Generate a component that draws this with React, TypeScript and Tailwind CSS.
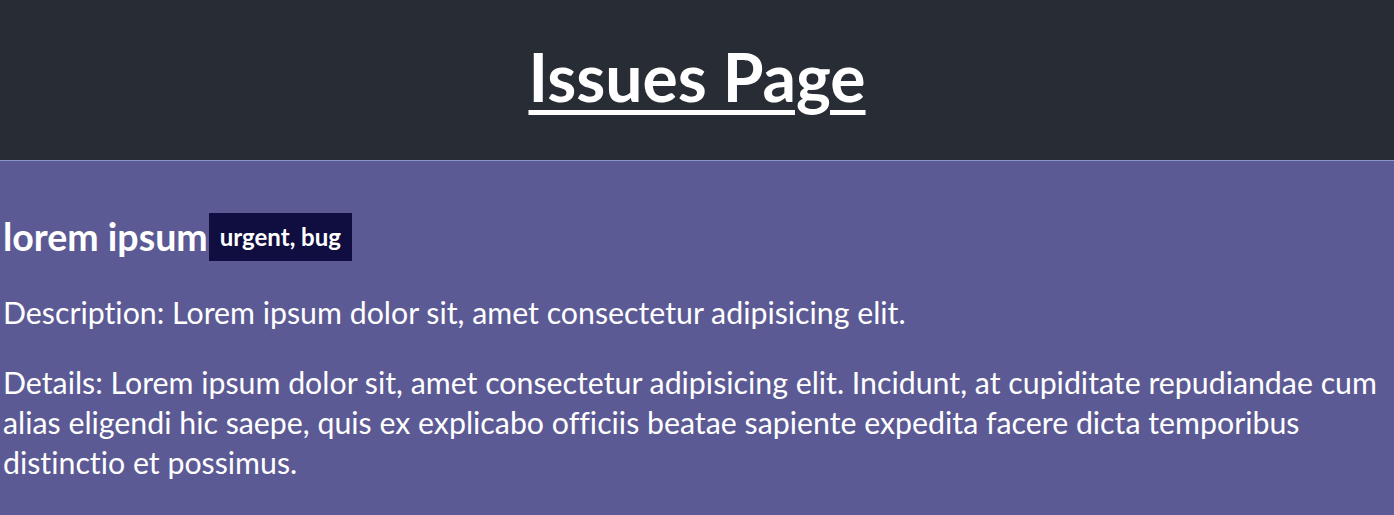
import React from "react";

const App = () => {
  return (
    <div className="min-h-[515px] bg-[#5c5a94] text-white font-['Lato','Noto_Sans',sans-serif] [font-variant-ligatures:none]">
      <header className="h-[161px] bg-[#282c34] border-b border-[#8a96cc] flex items-center justify-center">
        <h1 className="text-[66px] font-bold underline underline-offset-[8px] decoration-[5px] leading-none mb-[6px]">
          Issues Page
        </h1>
      </header>
      <section className="px-[3px] pt-[52px]">
        <div className="flex items-center">
          <h2 className="text-[37.5px] font-bold leading-none">lorem ipsum</h2>
          <span className="bg-[#100e40] text-[24px] font-bold px-[11px] h-[48px] flex items-center ml-[1px]">
            urgent, bug
          </span>
        </div>
        <p className="text-[30.3px] leading-[40px] mt-[31px]">
          Description: Lorem ipsum dolor sit, amet consectetur adipisicing elit.
        </p>
        <p className="text-[30.3px] leading-[40px] mt-[30px]">
          Details: Lorem ipsum dolor sit, amet consectetur adipisicing elit. Incidunt, at cupiditate repudiandae cum
          alias eligendi hic saepe, quis ex explicabo officiis beatae sapiente expedita facere dicta temporibus
          distinctio et possimus.
        </p>
      </section>
    </div>
  );
};

export default App;
